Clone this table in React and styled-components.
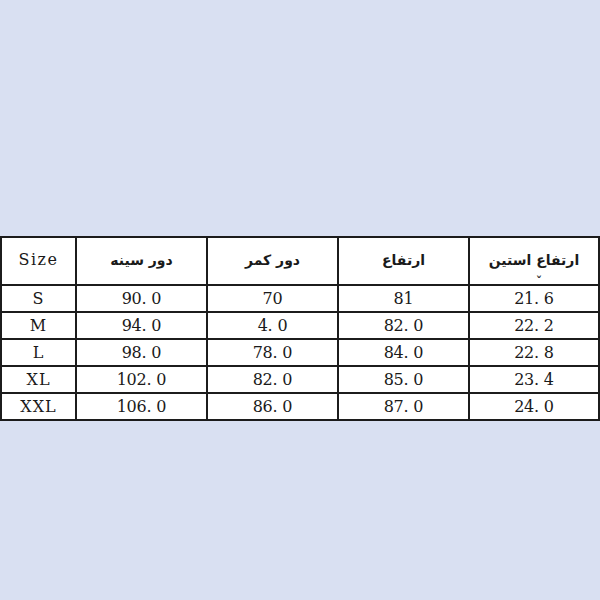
import React from "react";
import styled, { createGlobalStyle } from "styled-components";

const GlobalStyle = createGlobalStyle`
  html, body {
    margin: 0;
    padding: 0;
    background: #d9e0f2;
  }
`;

const columns = [
  { key: "size", label: "Size", width: 75, latin: true },
  { key: "chest", label: "دور سینه", width: 131 },
  { key: "waist", label: "دور کمر", width: 131 },
  { key: "height", label: "ارتفاع", width: 131 },
  { key: "sleeve", label: "ارتفاع استین", width: 130, mark: true },
];

const rows = [
  ["S", "90.0", "70", "81", "21.6"],
  ["M", "94.0", "4.0", "82.0", "22.2"],
  ["L", "98.0", "78.0", "84.0", "22.8"],
  ["XL", "102.0", "82.0", "85.0", "23.4"],
  ["XXL", "106.0", "86.0", "87.0", "24.0"],
];

// the numbers in the picture use a full-width dot, so "90.0" shows as "90. 0"
const spaced = (v) => v.replace(".", ". ");

const SizeChartPage = () => {
  return (
    <Page>
      <GlobalStyle />
      <Table>
        <colgroup>
          {columns.map((c) => (
            <col key={c.key} style={{ width: c.width }} />
          ))}
        </colgroup>
        <thead>
          <tr>
            {columns.map((c) => (
              <HeadCell key={c.key} $latin={c.latin} dir={c.latin ? "ltr" : "rtl"}>
                {c.label}
                {c.mark && <Mark>ˇ</Mark>}
              </HeadCell>
            ))}
          </tr>
        </thead>
        <tbody>
          {rows.map((r) => (
            <tr key={r[0]}>
              {r.map((v, i) => (
                <Cell key={i} $label={i === 0}>
                  {spaced(v)}
                </Cell>
              ))}
            </tr>
          ))}
        </tbody>
      </Table>
    </Page>
  );
};

const Page = styled.main`
  width: 600px;
  height: 600px;
  box-sizing: border-box;
  padding-top: 236px;
  background: #d9e0f2;
`;

const Table = styled.table`
  width: 599px;
  table-layout: fixed;
  border-collapse: collapse;
  background: #ffffff;
  border: 2px solid #1c1c1c;
`;

const HeadCell = styled.th`
  position: relative;
  height: 43px;
  padding: 0 0 3px;
  border: 2px solid #1c1c1c;
  text-align: center;
  color: #1a1a1a;
  font-family: ${(p) =>
    p.$latin ? `"DejaVu Serif", serif` : `"DejaVu Sans", sans-serif`};
  font-size: ${(p) => (p.$latin ? "16px" : "14px")};
  font-weight: ${(p) => (p.$latin ? 400 : 700)};
  letter-spacing: ${(p) => (p.$latin ? "1.5px" : "0")};
`;

const Mark = styled.span`
  position: absolute;
  left: 66px;
  bottom: -5px;
  font-family: "DejaVu Sans", sans-serif;
  font-size: 12px;
  font-weight: 700;
  color: #333;
`;

const Cell = styled.td`
  height: 25px;
  padding: 0;
  border: 2px solid #1c1c1c;
  text-align: center;
  color: #1a1a1a;
  font-family: "DejaVu Serif", serif;
  font-size: 16px;
  letter-spacing: ${(p) => (p.$label ? "1px" : "-0.2px")};
  white-space: pre;
`;

export default SizeChartPage;
